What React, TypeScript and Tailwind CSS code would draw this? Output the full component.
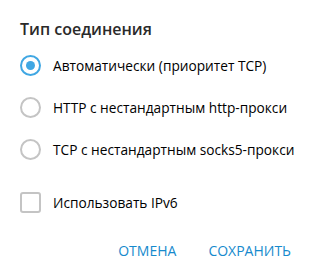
const options = [
  "Автоматически (приоритет TCP)",
  "HTTP с нестандартным http-прокси",
  "TCP с нестандартным socks5-прокси",
];

function Radio({ checked }: { checked: boolean }) {
  return (
    <span
      className={
        "flex h-[21px] w-[21px] shrink-0 items-center justify-center rounded-full border-2 " +
        (checked ? "border-[#40a7e3]" : "border-[#c4c4c4]")
      }
    >
      {checked && <span className="h-[9px] w-[9px] rounded-full bg-[#40a7e3]" />}
    </span>
  );
}

export default function App() {
  const selected = 0;
  return (
    <div
      className="h-[275px] w-[314px] bg-white pl-5 pt-[17px] text-[#000]"
      style={{ fontFamily: '"Open Sans", sans-serif' }}
    >
      <h1 className="text-[16px] leading-[24px] font-semibold text-[#2a2a2a]">Тип соединения</h1>

      <div className="mt-[14px] flex flex-col gap-[21px]">
        {options.map((label, i) => (
          <div key={label} className="flex items-center gap-[12px]">
            <Radio checked={i === selected} />
            <span className="text-[13.7px] leading-[21px]">{label}</span>
          </div>
        ))}
      </div>

      <div className="mt-[32px] flex items-center gap-[12px]">
        <span className="h-[21px] w-[21px] shrink-0 rounded-[3px] border-2 border-[#c4c4c4]" />
        <span className="text-[13.7px] leading-[21px]">Использовать IPv6</span>
      </div>

      <div className="mt-[28px] flex justify-end gap-[32px] pr-[23px] text-[14px] leading-[20px] font-medium text-[#168acd]">
        <button>ОТМЕНА</button>
        <button>СОХРАНИТЬ</button>
      </div>
    </div>
  );
}
